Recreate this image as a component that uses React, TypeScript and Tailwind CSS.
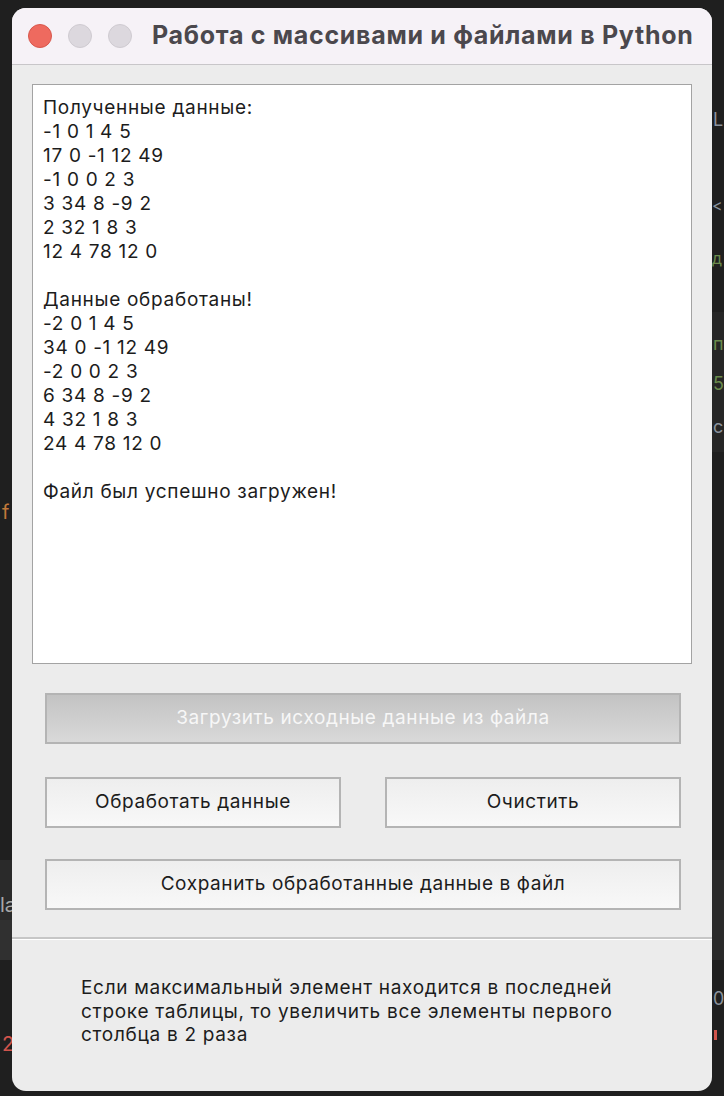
const received = [
  'Полученные данные:',
  '-1 0 1 4 5',
  '17 0 -1 12 49',
  '-1 0 0 2 3',
  '3 34 8 -9 2',
  '2 32 1 8 3',
  '12 4 78 12 0',
  '',
  'Данные обработаны!',
  '-2 0 1 4 5',
  '34 0 -1 12 49',
  '-2 0 0 2 3',
  '6 34 8 -9 2',
  '4 32 1 8 3',
  '24 4 78 12 0',
  '',
  'Файл был успешно загружен!',
];

function TkButton({ label, disabled, className }: { label: string; disabled?: boolean; className?: string }) {
  return (
    <button
      className={
        'flex h-[51px] items-center justify-center border-2 text-[19px] tracking-[0.6px] ' +
        (disabled
          ? 'border-[#b4b4b4] bg-gradient-to-b from-[#c3c3c3] to-[#d9d9d9] text-[#f7f7f7] '
          : 'border-[#b4b4b4] bg-gradient-to-b from-[#eeeeee] to-[#f8f8f8] text-[#1c1c1c] ') +
        (className ?? '')
      }
    >
      {label}
    </button>
  );
}

export default function App() {
  return (
    <div
      className="relative h-[1096px] w-[724px] overflow-hidden bg-[#1f1f1f] pt-[8px] pl-[12px]"
      style={{ fontFamily: 'Inter, "Noto Sans", sans-serif' }}
    >
      {/* editor fragments behind the window */}
      <div className="absolute left-0 top-[860px] h-[60px] w-[12px] bg-[#2a2a2a]" />
      <div className="absolute left-0 top-[920px] h-[40px] w-[12px] bg-[#303030]" />
      <div className="absolute right-0 top-[312px] h-[140px] w-[12px] bg-[#262626]" />
      <div className="absolute right-0 top-[860px] h-[100px] w-[12px] bg-[#2a2a2a]" />
      <span className="absolute left-[2px] top-[500px] text-[20px] leading-[24px] text-[#c2793a]">f</span>
      <span className="absolute left-0 top-[893px] text-[20px] leading-[24px] text-[#a8a8a8]">la</span>
      <span className="absolute left-[2px] top-[1032px] text-[20px] leading-[24px] text-[#d0544c]">2</span>
      <span className="absolute left-[713px] top-[108px] text-[18px] leading-[24px] text-[#8a929c]">L</span>
      <span className="absolute left-[712px] top-[193px] text-[16px] leading-[24px] text-[#8a929c]">&lt;</span>
      <span className="absolute left-[712px] top-[246px] text-[16px] leading-[24px] text-[#6a8a4c]">д</span>
      <span className="absolute left-[713px] top-[332px] text-[18px] leading-[24px] text-[#6a8a4c]">п</span>
      <span className="absolute left-[713px] top-[372px] text-[18px] leading-[24px] text-[#6a8a4c]">5</span>
      <span className="absolute left-[713px] top-[415px] text-[18px] leading-[24px] text-[#8a929c]">c</span>
      <span className="absolute left-[713px] top-[987px] text-[18px] leading-[24px] text-[#8a929c]">0</span>
      <span className="absolute left-[714px] top-[1030px] h-[10px] w-[3px] bg-[#d0544c]" />

      {/* window */}
      <div className="relative flex h-[1083px] w-[700px] flex-col overflow-hidden rounded-[14px] bg-[#ececec]">
        <div className="flex h-[57px] items-center border-b border-[#c8c6c9] bg-[#f6f2f7] pl-[16px]">
          <div className="flex gap-[16px]">
            <span className="h-[24px] w-[24px] rounded-full border border-[#d8574c] bg-[#ee6a5f]" />
            <span className="h-[24px] w-[24px] rounded-full border border-[#cfcbd1] bg-[#dcd8de]" />
            <span className="h-[24px] w-[24px] rounded-full border border-[#cfcbd1] bg-[#dcd8de]" />
          </div>
          <h1 className="ml-[20px] whitespace-nowrap text-[25px] font-bold tracking-[0.7px] text-[#4b484d]">
            Работа с массивами и файлами в Python
          </h1>
        </div>

        <div className="flex flex-col px-[20px] pt-[19px]">
          <div className="h-[580px] border border-[#a3a3a3] bg-white px-[10px] pt-[11px] text-[19px] leading-[24px] tracking-[0.7px] text-[#1c1c1c]">
            {received.map((line, i) => (
              <div key={i} className="h-[24px] whitespace-pre">
                {line}
              </div>
            ))}
          </div>
        </div>

        <div className="flex flex-col pl-[33px] pr-[31px] pt-[29px]">
          <TkButton label="Загрузить исходные данные из файла" disabled />
          <div className="mt-[33px] flex justify-between">
            <TkButton label="Обработать данные" className="w-[296px]" />
            <TkButton label="Очистить" className="w-[296px]" />
          </div>
          <TkButton label="Сохранить обработанные данные в файл" className="mt-[31px]" />
        </div>

        <div className="mt-[27px] h-[2px] bg-[#c6c6c6]" />
        <div className="h-[1px] bg-white" />

        <p className="ml-[69px] w-[560px] pt-[36px] text-[19px] leading-[23.5px] tracking-[0.7px] text-[#1c1c1c]">
          Если максимальный элемент находится в последней строке таблицы, то увеличить все элементы первого столбца в 2 раза
        </p>
      </div>
    </div>
  );
}
